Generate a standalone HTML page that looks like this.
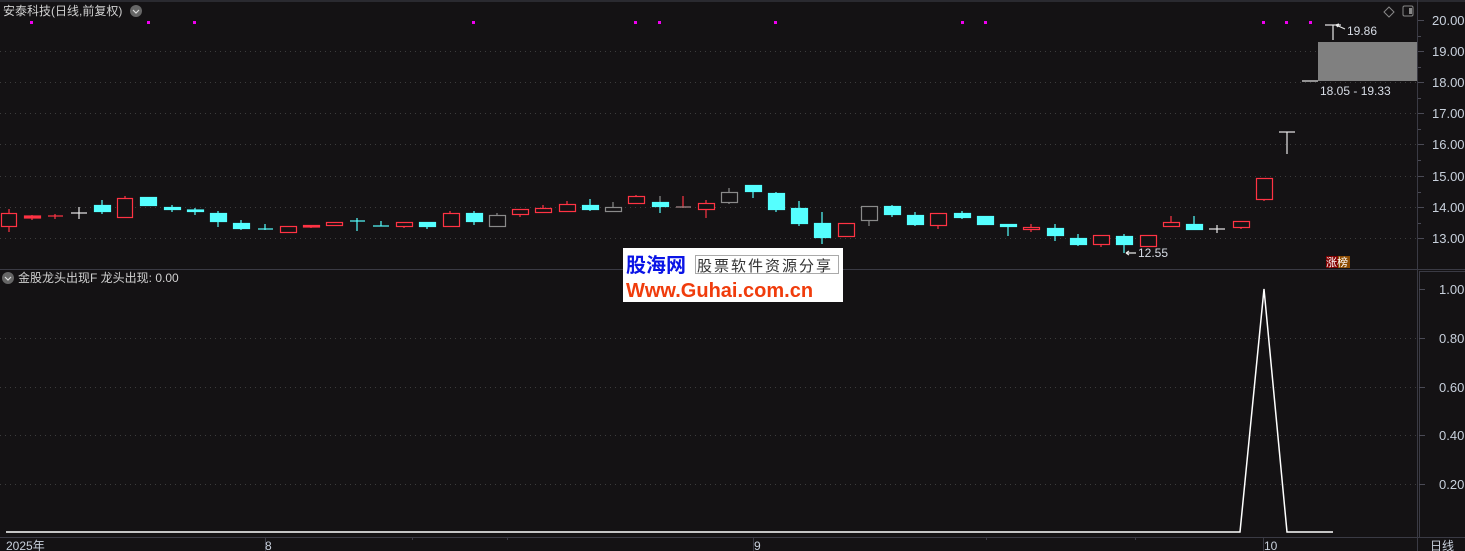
<!DOCTYPE html>
<html><head><meta charset="utf-8"><style>
html,body{margin:0;padding:0;background:#141214;width:1465px;height:551px;overflow:hidden}
svg{display:block}
text{font-family:"Liberation Sans","Noto Sans CJK SC",sans-serif}
</style></head><body>
<svg width="1465" height="551" xmlns="http://www.w3.org/2000/svg">
<rect width="1465" height="551" fill="#141214"/>
<line x1="0" y1="1" x2="1465" y2="1" stroke="#2a2a30" stroke-width="2"/>
<!-- grid -->
<g stroke="#3c3c3c" stroke-dasharray="1,4" stroke-width="1">
<line x1="0" y1="51.5" x2="1417" y2="51.5"/><line x1="0" y1="82.5" x2="1417" y2="82.5"/>
<line x1="0" y1="113.5" x2="1417" y2="113.5"/><line x1="0" y1="144.5" x2="1417" y2="144.5"/>
<line x1="0" y1="176.5" x2="1417" y2="176.5"/><line x1="0" y1="207.5" x2="1417" y2="207.5"/>
<line x1="0" y1="238.5" x2="1417" y2="238.5"/>
<line x1="0" y1="338.5" x2="1417" y2="338.5"/><line x1="0" y1="387.5" x2="1417" y2="387.5"/>
<line x1="0" y1="435.5" x2="1417" y2="435.5"/><line x1="0" y1="484.5" x2="1417" y2="484.5"/>
</g>
<!-- frame lines -->
<line x1="0" y1="269.5" x2="1465" y2="269.5" stroke="#3a3a44"/>
<line x1="1417.5" y1="0" x2="1417.5" y2="551" stroke="#3a3a44"/>
<line x1="1419.5" y1="272" x2="1419.5" y2="537" stroke="#3a3a44"/>
<line x1="1419" y1="271.5" x2="1465" y2="271.5" stroke="#3a3a44"/>
<line x1="0" y1="537.5" x2="1465" y2="537.5" stroke="#3a3a44"/>
<g stroke="#3a3a44"><line x1="265.5" y1="537" x2="265.5" y2="551"/><line x1="753.5" y1="537" x2="753.5" y2="551"/><line x1="1263.5" y1="537" x2="1263.5" y2="551"/>
<line x1="507.5" y1="537" x2="507.5" y2="540"/><line x1="986.5" y1="537" x2="986.5" y2="540"/><line x1="1135.5" y1="537" x2="1135.5" y2="540"/><line x1="412.5" y1="537" x2="412.5" y2="540"/></g>
<!-- axis ticks -->
<g stroke="#4a4a55">
<line x1="1418" y1="20.5" x2="1424" y2="20.5"/><line x1="1418" y1="51.5" x2="1424" y2="51.5"/><line x1="1418" y1="82.5" x2="1424" y2="82.5"/><line x1="1418" y1="113.5" x2="1424" y2="113.5"/><line x1="1418" y1="144.5" x2="1424" y2="144.5"/><line x1="1418" y1="176.5" x2="1424" y2="176.5"/><line x1="1418" y1="207.5" x2="1424" y2="207.5"/><line x1="1418" y1="238.5" x2="1424" y2="238.5"/>
<line x1="1418" y1="36.5" x2="1421" y2="36.5"/><line x1="1418" y1="67.5" x2="1421" y2="67.5"/><line x1="1418" y1="98.5" x2="1421" y2="98.5"/><line x1="1418" y1="129.5" x2="1421" y2="129.5"/><line x1="1418" y1="160.5" x2="1421" y2="160.5"/><line x1="1418" y1="192.5" x2="1421" y2="192.5"/><line x1="1418" y1="223.5" x2="1421" y2="223.5"/>
<line x1="1419" y1="289.5" x2="1425" y2="289.5"/><line x1="1419" y1="338.5" x2="1425" y2="338.5"/><line x1="1419" y1="387.5" x2="1425" y2="387.5"/><line x1="1419" y1="435.5" x2="1425" y2="435.5"/><line x1="1419" y1="484.5" x2="1425" y2="484.5"/>
</g>
<g fill="#c8d0dc" font-size="13">
<text x="1432" y="25">20.00</text><text x="1432" y="56">19.00</text><text x="1432" y="87">18.00</text><text x="1432" y="118">17.00</text><text x="1432" y="149">16.00</text><text x="1432" y="181">15.00</text><text x="1432" y="212">14.00</text><text x="1432" y="243">13.00</text>
<text x="1439" y="294">1.00</text><text x="1439" y="343">0.80</text><text x="1439" y="392">0.60</text><text x="1439" y="440">0.40</text><text x="1439" y="489">0.20</text>
</g>
<g fill="#c8d0dc" font-size="12">
<text x="6" y="550">2025年</text><text x="265" y="550">8</text><text x="754" y="550">9</text><text x="1264" y="550">10</text><text x="1430" y="550">日线</text>
</g>
<!-- titles -->
<text x="3" y="15" fill="#d0d0d0" font-size="12">安泰科技(日线,前复权)</text>
<circle cx="136" cy="11" r="6" fill="#666"/><path d="M133 10 l3 3 l3 -3" stroke="#ddd" fill="none" stroke-width="1.2"/>
<circle cx="8" cy="278" r="6" fill="#666"/><path d="M5 277 l3 3 l3 -3" stroke="#ddd" fill="none" stroke-width="1.2"/>
<text x="18" y="282" fill="#d0d0d0" font-size="12">金股龙头出现F  龙头出现: 0.00</text>
<path d="M1389 7 l5 5 l-5 5 l-5 -5z" stroke="#888" fill="none"/>
<rect x="1403" y="6" width="10" height="10" rx="1.5" stroke="#888" fill="none"/><rect x="1409" y="8" width="3" height="6" fill="#888"/>
<!-- magenta dots -->
<g fill="#ee00ee">
<rect x="30" y="21" width="3" height="3"/><rect x="147" y="21" width="3" height="3"/><rect x="193" y="21" width="3" height="3"/><rect x="472" y="21" width="3" height="3"/><rect x="634" y="21" width="3" height="3"/><rect x="658" y="21" width="3" height="3"/><rect x="774" y="21" width="3" height="3"/><rect x="961" y="21" width="3" height="3"/><rect x="984" y="21" width="3" height="3"/><rect x="1262" y="21" width="3" height="3"/><rect x="1285" y="21" width="3" height="3"/><rect x="1309" y="21" width="3" height="3"/>
</g>
<!-- candles -->
<g stroke-width="1.2">
<!-- red hollow -->
<g stroke="#ff3344" fill="#141214">
<line x1="9" y1="209" x2="9" y2="232"/><rect x="1.5" y="213.5" width="15" height="13"/>
<line x1="32" y1="215" x2="32" y2="220"/><rect x="24.5" y="216" width="16" height="2" fill="#ff3344"/>
<line x1="55" y1="214" x2="55" y2="219"/><line x1="48" y1="216" x2="63" y2="216"/>
<line x1="125" y1="196" x2="125" y2="198"/><rect x="117.5" y="198.5" width="15" height="19"/>
<rect x="280.5" y="226.5" width="16" height="6"/>
<line x1="311" y1="225" x2="311" y2="228"/><rect x="303.5" y="225.5" width="16" height="1.5" fill="#ff3344"/>
<rect x="326.5" y="222.5" width="16" height="3"/>
<line x1="404" y1="222" x2="404" y2="228"/><rect x="396.5" y="222.5" width="16" height="4"/>
<line x1="450" y1="211" x2="450" y2="227"/><rect x="443.5" y="213.5" width="16" height="13"/>
<line x1="520" y1="209" x2="520" y2="217"/><rect x="512.5" y="209.5" width="16" height="5"/>
<line x1="543" y1="205" x2="543" y2="213"/><rect x="535.5" y="208.5" width="16" height="4"/>
<line x1="567" y1="201" x2="567" y2="212"/><rect x="559.5" y="204.5" width="16" height="7"/>
<line x1="636" y1="195" x2="636" y2="204"/><rect x="628.5" y="196.5" width="16" height="7"/>
<line x1="683" y1="196" x2="683" y2="208"/><line x1="676" y1="207" x2="691" y2="207"/>
<line x1="706" y1="200" x2="706" y2="218"/><rect x="698.5" y="203.5" width="16" height="6"/>
<line x1="846" y1="223" x2="846" y2="237"/><rect x="838.5" y="223.5" width="16" height="13"/>
<line x1="938" y1="213" x2="938" y2="229"/><rect x="930.5" y="213.5" width="16" height="12"/>
<line x1="1031" y1="224" x2="1031" y2="232"/><rect x="1023.5" y="227.5" width="16" height="2"/>
<line x1="1101" y1="235" x2="1101" y2="247"/><rect x="1093.5" y="235.5" width="16" height="9"/>
<line x1="1148" y1="235" x2="1148" y2="247"/><rect x="1140.5" y="235.5" width="16" height="11"/>
<line x1="1171" y1="216" x2="1171" y2="222"/><rect x="1163.5" y="222.5" width="16" height="4"/>
<line x1="1241" y1="221" x2="1241" y2="229"/><rect x="1233.5" y="221.5" width="16" height="6"/>
<line x1="1264" y1="178" x2="1264" y2="201"/><rect x="1256.5" y="178.5" width="16" height="21"/>
</g>
<!-- gray hollow -->
<g stroke="#8a8a8a" fill="#141214">
<line x1="497" y1="213" x2="497" y2="227"/><rect x="489.5" y="215.5" width="16" height="11"/>
<line x1="613" y1="202" x2="613" y2="212"/><rect x="605.5" y="207.5" width="16" height="4"/>
<line x1="729" y1="188" x2="729" y2="204"/><rect x="721.5" y="192.5" width="16" height="10"/>
<line x1="869" y1="206" x2="869" y2="226"/><rect x="861.5" y="206.5" width="16" height="14"/>
<line x1="660" y1="196" x2="660" y2="208"/><line x1="676" y1="207" x2="691" y2="207"/>
</g>
<!-- cyan -->
<g stroke="#55ffff" fill="#55ffff">
<line x1="102" y1="200" x2="102" y2="214"/><rect x="94.5" y="205.5" width="16" height="6"/>
<rect x="140.5" y="197.5" width="16" height="8"/>
<line x1="172" y1="205" x2="172" y2="212"/><rect x="164.5" y="207.5" width="16" height="2"/>
<line x1="195" y1="208" x2="195" y2="215"/><rect x="187.5" y="210" width="16" height="1.5"/>
<line x1="218" y1="211" x2="218" y2="227"/><rect x="210.5" y="213.5" width="16" height="8"/>
<line x1="241" y1="220" x2="241" y2="230"/><rect x="233.5" y="223.5" width="16" height="5"/>
<line x1="265" y1="224" x2="265" y2="230"/><line x1="258" y1="229" x2="273" y2="229"/>
<line x1="357" y1="218" x2="357" y2="231"/><line x1="350" y1="221" x2="365" y2="221"/>
<line x1="381" y1="221" x2="381" y2="226"/><line x1="373" y1="226" x2="389" y2="226"/>
<line x1="427" y1="222" x2="427" y2="229"/><rect x="419.5" y="222.5" width="16" height="4"/>
<line x1="474" y1="211" x2="474" y2="225"/><rect x="466.5" y="213.5" width="16" height="8"/>
<line x1="590" y1="199" x2="590" y2="211"/><rect x="582.5" y="205.5" width="16" height="4"/>
<line x1="660" y1="202" x2="660" y2="213"/><rect x="652.5" y="202.5" width="16" height="4"/>
<line x1="753" y1="185" x2="753" y2="198"/><rect x="745.5" y="185.5" width="16" height="6"/>
<line x1="776" y1="192" x2="776" y2="212"/><rect x="768.5" y="193.5" width="16" height="16"/>
<line x1="799" y1="201" x2="799" y2="226"/><rect x="791.5" y="208.5" width="16" height="15"/>
<line x1="822" y1="212" x2="822" y2="244"/><rect x="814.5" y="223.5" width="16" height="14"/>
<line x1="892" y1="205" x2="892" y2="217"/><rect x="884.5" y="206.5" width="16" height="8"/>
<line x1="915" y1="212" x2="915" y2="226"/><rect x="907.5" y="215.5" width="16" height="9"/>
<line x1="962" y1="211" x2="962" y2="219"/><rect x="954.5" y="213.5" width="16" height="4"/>
<rect x="977.5" y="216.5" width="16" height="8"/>
<line x1="1008" y1="224" x2="1008" y2="236"/><rect x="1000.5" y="224.5" width="16" height="2"/>
<line x1="1055" y1="224" x2="1055" y2="241"/><rect x="1047.5" y="228.5" width="16" height="7"/>
<line x1="1078" y1="234" x2="1078" y2="246"/><rect x="1070.5" y="238.5" width="16" height="6"/>
<line x1="1124" y1="234" x2="1124" y2="253"/><rect x="1116.5" y="236.5" width="16" height="8"/>
<line x1="1194" y1="216" x2="1194" y2="230"/><rect x="1186.5" y="224.5" width="16" height="5"/>
</g>
<!-- white -->
<g stroke="#e8e8e8" fill="none">
<line x1="79" y1="207" x2="79" y2="219"/><line x1="71" y1="213" x2="87" y2="213"/>
<line x1="1217" y1="225" x2="1217" y2="233"/><line x1="1209" y1="229" x2="1225" y2="229"/>
<line x1="1287" y1="132" x2="1287" y2="154"/><line x1="1279" y1="132" x2="1295" y2="132"/>
<line x1="1333" y1="25" x2="1333" y2="40"/><line x1="1325" y1="25" x2="1341" y2="25"/>
<line x1="1302" y1="81" x2="1318" y2="81"/>
<path d="M1336 25 l9 4 M1336 25 l3 -1 M1336 25 l2 2"/>
<path d="M1126 253 l10 0 M1126 253 l3 -2 M1126 253 l3 2"/>
</g>
</g>
<rect x="1318" y="42" width="99" height="39" fill="#808080"/>
<g fill="#d8dde6" font-size="12">
<text x="1347" y="35">19.86</text>
<text x="1320" y="95">18.05 - 19.33</text>
<text x="1138" y="257">12.55</text>
</g>
<rect x="1326" y="256" width="12" height="12" fill="#800000"/><rect x="1338" y="256" width="12" height="12" fill="#8b4a00"/>
<text x="1326" y="266" fill="#fff" font-size="11">涨榜</text>
<!-- indicator -->
<polyline points="6,532 1240,532 1264,289 1287,532 1333,532" fill="none" stroke="#ffffff" stroke-width="1.5"/>
<!-- logo -->
<rect x="623" y="248" width="220" height="54" fill="#fff"/>
<text x="626" y="272" fill="#0a14e6" font-size="20" font-weight="bold">股海网</text>
<g stroke="#aaa" fill="none"><rect x="695.5" y="255.5" width="143" height="18"/></g>
<text x="697" y="271" fill="#333" font-size="15" font-family="'Noto Serif CJK SC',serif" letter-spacing="2">股票软件资源分享</text>
<text x="626" y="297" fill="#f03c0c" font-size="20" font-weight="bold">Www.Guhai.com.cn</text>
</svg>
</body></html>
